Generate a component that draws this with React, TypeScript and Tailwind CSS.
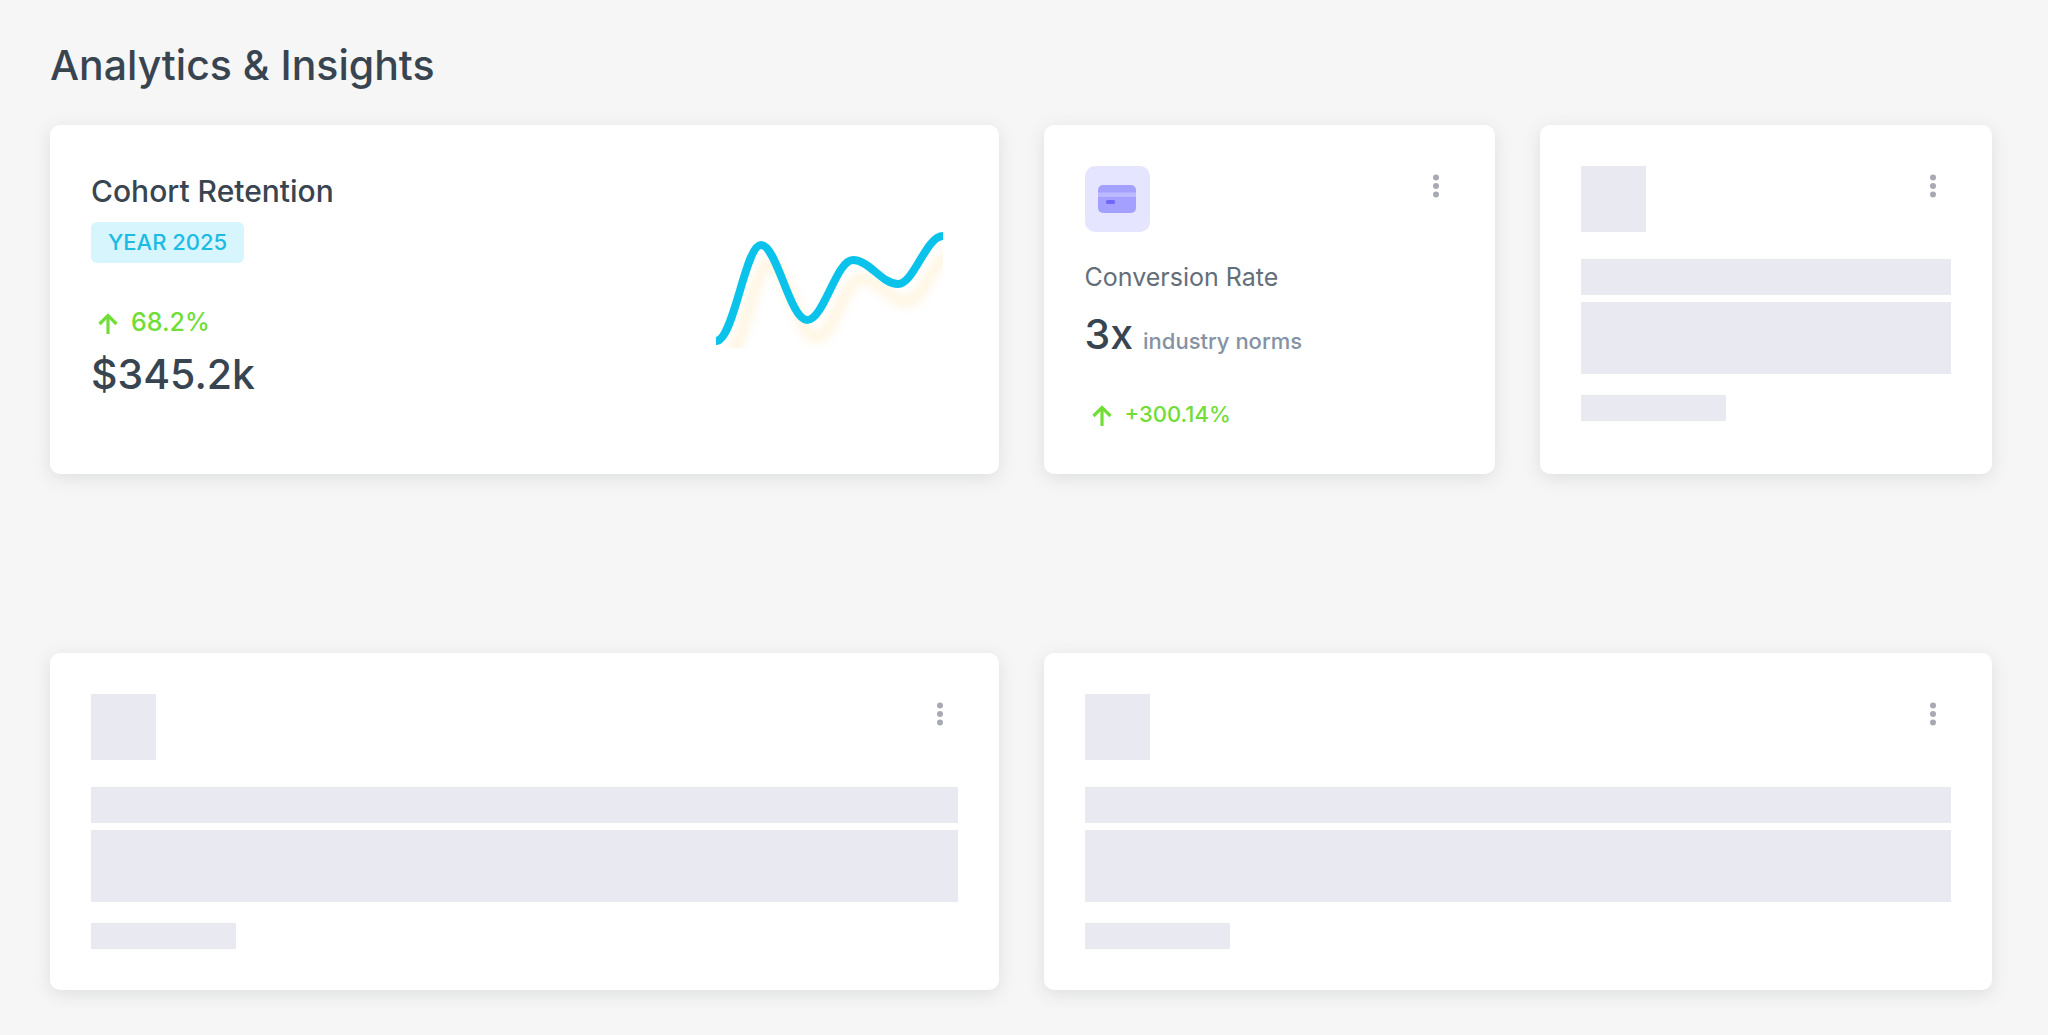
import React from 'react';

const cardClass =
  'rounded-[10px] bg-white p-[41px] shadow-[0_4px_18px_rgba(60,66,72,0.13)]';

const MenuButton: React.FC<{ label: string }> = ({ label }) => (
  <button type="button" aria-label={label} className="flex h-10 w-9 items-center justify-center">
    <svg width="8" height="24" viewBox="0 0 8 24" fill="#a7a9b3">
      <circle cx="4" cy="3.4" r="3" />
      <circle cx="4" cy="12" r="3" />
      <circle cx="4" cy="20.6" r="3" />
    </svg>
  </button>
);

const ArrowUp: React.FC = () => (
  <svg
    width="34"
    height="32"
    viewBox="0 0 34 32"
    fill="none"
    stroke="currentColor"
    strokeWidth="3.2"
    className="shrink-0"
  >
    <path d="M17 28V9.5" />
    <path d="M8.5 18 17 9.5l8.5 8.5" />
  </svg>
);

const CreditCardIcon: React.FC = () => (
  <div className="flex h-[66px] w-[65px] items-center justify-center rounded-[10px] bg-[#e6e5ff]">
    <svg width="38" height="28" viewBox="0 0 38 28">
      <rect width="38" height="28" rx="5" fill="#a3a0ff" />
      <rect y="7.5" width="38" height="4.5" fill="#bbb9ff" />
      <rect x="8" y="15" width="9" height="4" rx="1.5" fill="#6f67fb" />
    </svg>
  </div>
);

const Sparkline: React.FC = () => {
  const line =
    'M0 109C18 109 29 13 45 13S74 88 91 88 120 28 137 28C153 28 166 52 182 52S210 4 227 4';

  return (
    <svg
      width="227"
      height="116"
      viewBox="0 0 227 116"
      fill="none"
      role="img"
      aria-label="Retention trend"
      className="mb-5"
    >
      <defs>
        <filter id="line-shadow" x="-20%" y="-20%" width="140%" height="150%">
          <feGaussianBlur stdDeviation="5" />
        </filter>
      </defs>
      <path
        d={line}
        transform="translate(9 18)"
        stroke="#ffab00"
        strokeOpacity="0.13"
        strokeWidth="10"
        filter="url(#line-shadow)"
      />
      <path d={line} stroke="#0bc3ea" strokeWidth="8" />
    </svg>
  );
};

const SkeletonCard: React.FC<{ label: string }> = ({ label }) => (
  <section aria-label={label} className={cardClass}>
    <div className="flex items-start justify-between">
      <div className="h-[66px] w-[65px] bg-[#e9e9f2]" />
      <MenuButton label={`${label} options`} />
    </div>
    <div className="mt-[27px] h-9 bg-[#e9e9f2]" />
    <div className="mt-[7px] h-[72px] bg-[#e9e9f2]" />
    <div className="mt-[21px] h-[26px] w-[145px] bg-[#e9e9f2]" />
  </section>
);

const App: React.FC = () => {
  return (
    <main className="min-h-screen bg-[#f6f6f6] pt-10 pr-14 pb-10 pl-[50px] font-['Inter','Liberation_Sans',sans-serif] text-[#384551]">
      <h1 className="text-[41px] leading-[50px] font-medium">Analytics &amp; Insights</h1>

      <div className="mt-[35px] grid grid-cols-4 gap-x-[45px]">
        {/* Cohort retention */}
        <section className={`${cardClass} col-span-2 flex items-center justify-between pr-14`}>
          <div className="self-start">
            <h2 className="mt-1 text-[30px] leading-[42px] font-medium">Cohort Retention</h2>
            <span className="mt-[10px] inline-block rounded-md bg-[#d7f5fc] px-[17px] text-[22px] leading-[41px] font-medium text-[#1cbbe3]">
              YEAR 2025
            </span>
            <div className="mt-10 flex items-center gap-1.5 text-[#71dd37]">
              <ArrowUp />
              <span className="text-[25px] leading-[38px] font-medium">68.2%</span>
            </div>
            <p className="mt-1 text-[41px] leading-[58px] font-medium">$345.2k</p>
          </div>
          <Sparkline />
        </section>

        {/* Conversion rate */}
        <section className={cardClass}>
          <div className="flex items-start justify-between">
            <CreditCardIcon />
            <MenuButton label="Conversion rate options" />
          </div>
          <h2 className="mt-[25px] text-[25px] leading-[40px] text-[#646e78]">Conversion Rate</h2>
          <p className="mt-2 flex items-baseline gap-2.5">
            <span className="text-[41px] leading-[58px] font-medium">3x</span>
            <span className="text-[22px] font-medium text-[#8592a3]">industry norms</span>
          </p>
          <div className="mt-8 flex items-center gap-1.5 text-[#71dd37]">
            <ArrowUp />
            <span className="text-[22px] leading-[38px] font-medium">+300.14%</span>
          </div>
        </section>

        <SkeletonCard label="Loading metric" />
      </div>

      <div className="mt-[179px] grid grid-cols-2 gap-x-[45px]">
        <SkeletonCard label="Loading left report" />
        <SkeletonCard label="Loading right report" />
      </div>
    </main>
  );
};

export default App;
